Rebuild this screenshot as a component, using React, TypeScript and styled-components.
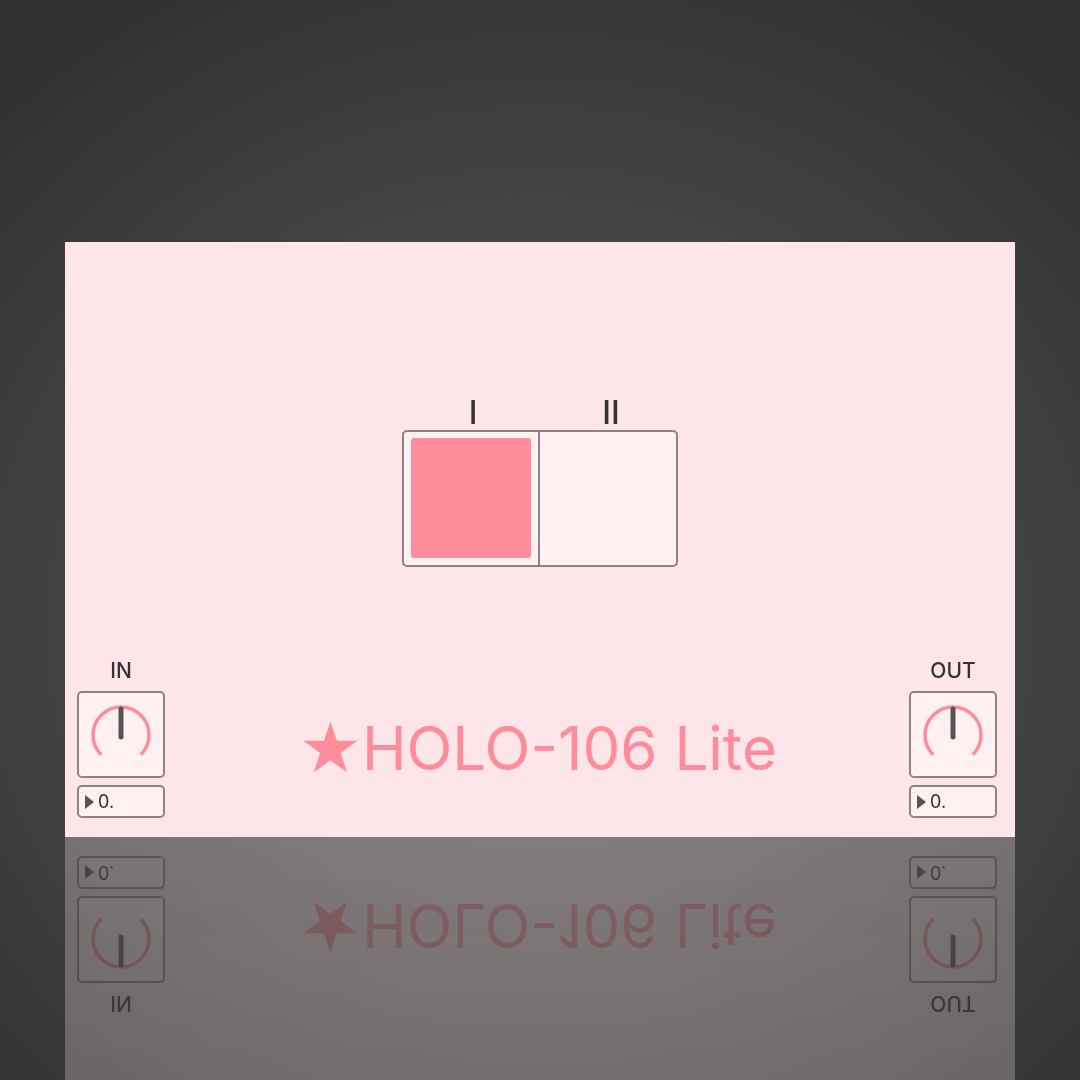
import React from 'react';
import styled, { createGlobalStyle } from 'styled-components';

const GlobalStyle = createGlobalStyle`
  html, body {
    margin: 0;
    padding: 0;
    overflow: hidden;
    background: #2e2e2e;
  }
  * {
    box-sizing: border-box;
  }
`;

const Stage = styled.div`
  width: 1080px;
  height: 1080px;
  overflow: hidden;
  padding: 242px 0 0 65px;
  background: radial-gradient(ellipse 75% 70% at 50% 58%, #565656 0%, #4a4a4a 40%, #2f2f2f 100%);
  font-family: Inter, 'Liberation Sans', sans-serif;
`;

const Panel = styled.div`
  width: 950px;
  height: 595px;
  background: #fde5ea;
  display: flex;
  flex-direction: column;
  -webkit-box-reflect: below 0 linear-gradient(rgba(0, 0, 0, 0.22), rgba(0, 0, 0, 0.3));
`;

const SwitchSection = styled.div`
  margin-top: 153px;
  display: flex;
  flex-direction: column;
  align-items: center;
`;

const SwitchLabels = styled.div`
  display: grid;
  grid-template-columns: 138px 138px;
  width: 276px;
  height: 35px;
  align-items: center;
`;

const SwitchLabel = styled.div`
  text-align: center;
  font-size: 32px;
  font-weight: 500;
  line-height: 32px;
  color: #333;
  padding-left: 4px;
`;

const SwitchBox = styled.div`
  width: 276px;
  height: 137px;
  border: 2px solid #8c8385;
  border-radius: 5px;
  background: #fff0f1;
  display: grid;
  grid-template-columns: 1fr 1fr;
  overflow: hidden;
`;

const SwitchCell = styled.div<{ $divider?: boolean }>`
  padding: 6px 7px 7px 7px;
  border-right: ${p => (p.$divider ? '2px solid #8c8385' : 'none')};
`;

const SwitchFill = styled.div<{ $active: boolean }>`
  width: 100%;
  height: 100%;
  border-radius: 3px;
  background: ${p => (p.$active ? '#ff8c9b' : 'transparent')};
`;

const BottomRow = styled.div`
  margin-top: auto;
  padding: 0 18px 19px 12px;
  display: grid;
  grid-template-columns: 88px 1fr 88px;
  align-items: end;
`;

const KnobColumn = styled.div`
  display: flex;
  flex-direction: column;
  align-items: center;
`;

const KnobLabel = styled.div`
  font-size: 21px;
  font-weight: 500;
  line-height: 24px;
  color: #333;
  margin-bottom: 8px;
`;

const KnobBox = styled.div`
  width: 88px;
  height: 87px;
  border: 2px solid #8c8385;
  border-radius: 5px;
  background: #fff0f1;
  display: flex;
  align-items: center;
  justify-content: center;
`;

const NumberBox = styled.div`
  width: 88px;
  height: 33px;
  margin-top: 7px;
  border: 2px solid #8c8385;
  border-radius: 5px;
  background: #fff0f1;
  display: flex;
  align-items: center;
  padding-left: 6px;
  gap: 4px;
  font-size: 18px;
  color: #333;
`;

const Triangle = styled.span`
  width: 0;
  height: 0;
  border-top: 7px solid transparent;
  border-bottom: 7px solid transparent;
  border-left: 9px solid #555;
`;

const Title = styled.div`
  text-align: center;
  font-size: 60px;
  line-height: 60px;
  color: #ff8c9b;
  padding-bottom: 40px;
  padding-left: 2px;
  white-space: nowrap;
`;

const Star = styled.span`
  font-family: 'DejaVu Sans', sans-serif;
  font-size: 70px;
  line-height: 60px;
  vertical-align: top;
`;

const Knob: React.FC<{ label: string }> = ({ label }) => (
  <KnobColumn>
    <KnobLabel>{label}</KnobLabel>
    <KnobBox>
      <svg width="70" height="70" viewBox="0 0 70 70">
        <path
          d="M 15.2 54.8 A 28 28 0 1 1 54.8 54.8"
          fill="none"
          stroke="#ff8c9b"
          strokeWidth="3.5"
        />
        <line x1="35" y1="37" x2="35" y2="9" stroke="#555" strokeWidth="5" strokeLinecap="round" />
      </svg>
    </KnobBox>
    <NumberBox>
      <Triangle />
      0.
    </NumberBox>
  </KnobColumn>
);

const App: React.FC = () => (
  <>
    <GlobalStyle />
    <Stage>
      <Panel>
        <SwitchSection>
          <SwitchLabels>
            <SwitchLabel>I</SwitchLabel>
            <SwitchLabel>II</SwitchLabel>
          </SwitchLabels>
          <SwitchBox>
            <SwitchCell $divider>
              <SwitchFill $active />
            </SwitchCell>
            <SwitchCell>
              <SwitchFill $active={false} />
            </SwitchCell>
          </SwitchBox>
        </SwitchSection>
        <BottomRow>
          <Knob label="IN" />
          <Title>
            <Star>★</Star>HOLO-106 Lite
          </Title>
          <Knob label="OUT" />
        </BottomRow>
      </Panel>
    </Stage>
  </>
);

export default App;
